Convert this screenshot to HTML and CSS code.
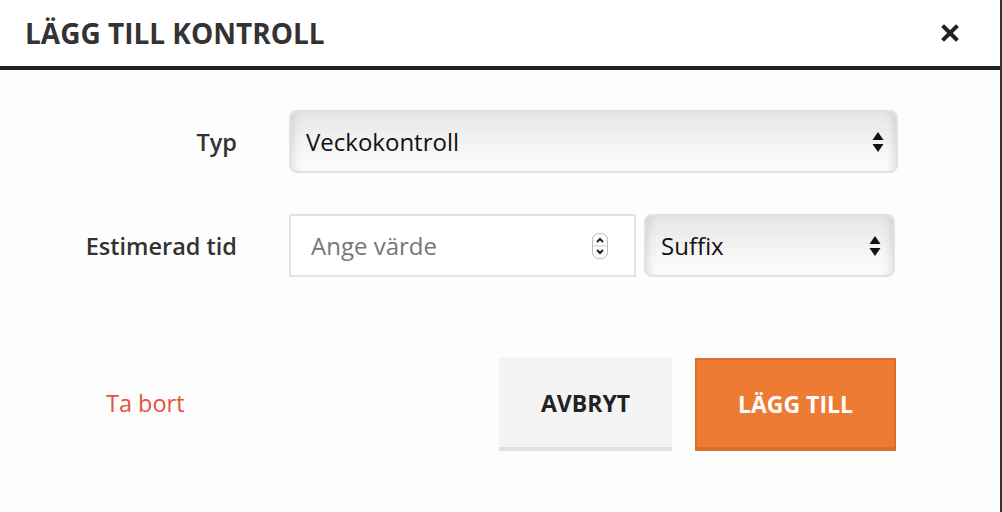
FILE: index.html
```html
<!DOCTYPE html>
<html lang="sv">
<head>
<meta charset="utf-8">
<title>Lägg till kontroll</title>
<link rel="stylesheet" href="styles.css">
</head>
<body>
<div class="modal">
  <div class="header">
    <h1 class="title">LÄGG TILL KONTROLL</h1>
    <button class="close" aria-label="Stäng">
      <svg width="18" height="18" viewBox="0 0 18 18"><path d="M3 3 L15 15 M15 3 L3 15" stroke="#222" stroke-width="4" stroke-linecap="square"/></svg>
    </button>
  </div>
  <div class="content">
    <div class="form">
      <label class="label">Typ</label>
      <div class="select select-wide">
        <span class="select-text">Veckokontroll</span>
        <svg class="arrows" width="12" height="22" viewBox="0 0 12 22"><path d="M6 1 L11.5 9 L0.5 9 Z M6 21 L11.5 13 L0.5 13 Z" fill="#111"/></svg>
      </div>
      <label class="label">Estimerad tid</label>
      <div class="pair">
        <div class="input">
          <span class="placeholder">Ange värde</span>
          <span class="spinner">
            <svg width="16" height="26" viewBox="0 0 16 26"><rect x="0.5" y="0.5" width="15" height="25" rx="6" fill="#fff" stroke="#bbb"/><line x1="1" y1="13" x2="15" y2="13" stroke="#ccc"/><path d="M5 9 L8 6 L11 9" fill="none" stroke="#222" stroke-width="2"/><path d="M5 17 L8 20 L11 17" fill="none" stroke="#222" stroke-width="2"/></svg>
          </span>
        </div>
        <div class="select select-small">
          <span class="select-text">Suffix</span>
          <svg class="arrows" width="12" height="22" viewBox="0 0 12 22"><path d="M6 1 L11.5 9 L0.5 9 Z M6 21 L11.5 13 L0.5 13 Z" fill="#111"/></svg>
        </div>
      </div>
    </div>
    <div class="actions">
      <a class="remove">Ta bort</a>
      <div class="buttons">
        <button class="btn btn-cancel">AVBRYT</button>
        <button class="btn btn-add">LÄGG TILL</button>
      </div>
    </div>
  </div>
</div>
</body>
</html>
```
FILE: styles.css
```css
* { box-sizing: border-box; }
html, body { margin: 0; padding: 0; }
body {
  font-family: "Open Sans", "Liberation Sans", sans-serif;
  background: #fdfdfd;
  width: 1002px;
  height: 512px;
  overflow: hidden;
}
.modal {
  width: 1002px;
  height: 512px;
  border-right: 2px solid #333;
  background: #fdfdfd;
}
.header {
  height: 70px;
  background: #fff;
  border-bottom: 4px solid #222;
  display: flex;
  align-items: center;
  justify-content: space-between;
  padding: 0 41px 0 25px;
}
.title {
  margin: 0;
  font-size: 28px;
  font-weight: 700;
  color: #333;
  letter-spacing: 0;
  line-height: 1;
}
.close {
  border: 0;
  background: none;
  padding: 0;
  width: 18px;
  height: 18px;
  display: flex;
}
.content {
  padding-top: 40px;
}
.form {
  display: grid;
  grid-template-columns: 237px 609px;
  column-gap: 52px;
  row-gap: 41px;
  align-items: center;
}
.label {
  text-align: right;
  font-size: 23.5px;
  font-weight: 600;
  color: #333;
}
.select {
  height: 63px;
  border: 2px solid #e2e2e2;
  border-radius: 8px;
  background: linear-gradient(#e6e6e6, #f7f7f7 70%, #fcfcfc);
  box-shadow: inset 8px 0 8px -6px rgba(0,0,0,0.12), inset -8px 0 8px -6px rgba(0,0,0,0.12);
  display: flex;
  align-items: center;
  justify-content: space-between;
  padding: 0 12px 0 15px;
}
.select-text {
  font-size: 24px;
  color: #111;
}
.select-small { width: 251px; }
.pair {
  display: flex;
  gap: 8px;
}
.input {
  width: 347px;
  height: 63px;
  border: 2px solid #e2e2e2;
  background: #fff;
  display: flex;
  align-items: center;
  justify-content: space-between;
  padding: 0 26px 0 20px;
}
.placeholder {
  font-size: 24px;
  color: #777;
}
.spinner { display: flex; }
.actions {
  display: flex;
  align-items: center;
  justify-content: space-between;
  width: 896px;
  margin-top: 81px;
  padding-left: 106px;
}
.remove {
  font-size: 23.5px;
  color: #e8503c;
  margin-bottom: 4px;
}
.buttons {
  display: flex;
  gap: 23px;
}
.btn {
  height: 93px;
  font-family: "Open Sans", "Liberation Sans", sans-serif;
  font-size: 23px;
  font-weight: 700;
  cursor: pointer;
}
.btn-cancel {
  width: 173px;
  background: #f4f4f4;
  color: #222;
  border: 0;
  border-bottom: 4px solid #e0e0e0;
}
.btn-add {
  width: 201px;
  background: #ed7b31;
  color: #fff;
  border: 2px solid #d8702c;
  border-bottom-width: 4px;
}
```
